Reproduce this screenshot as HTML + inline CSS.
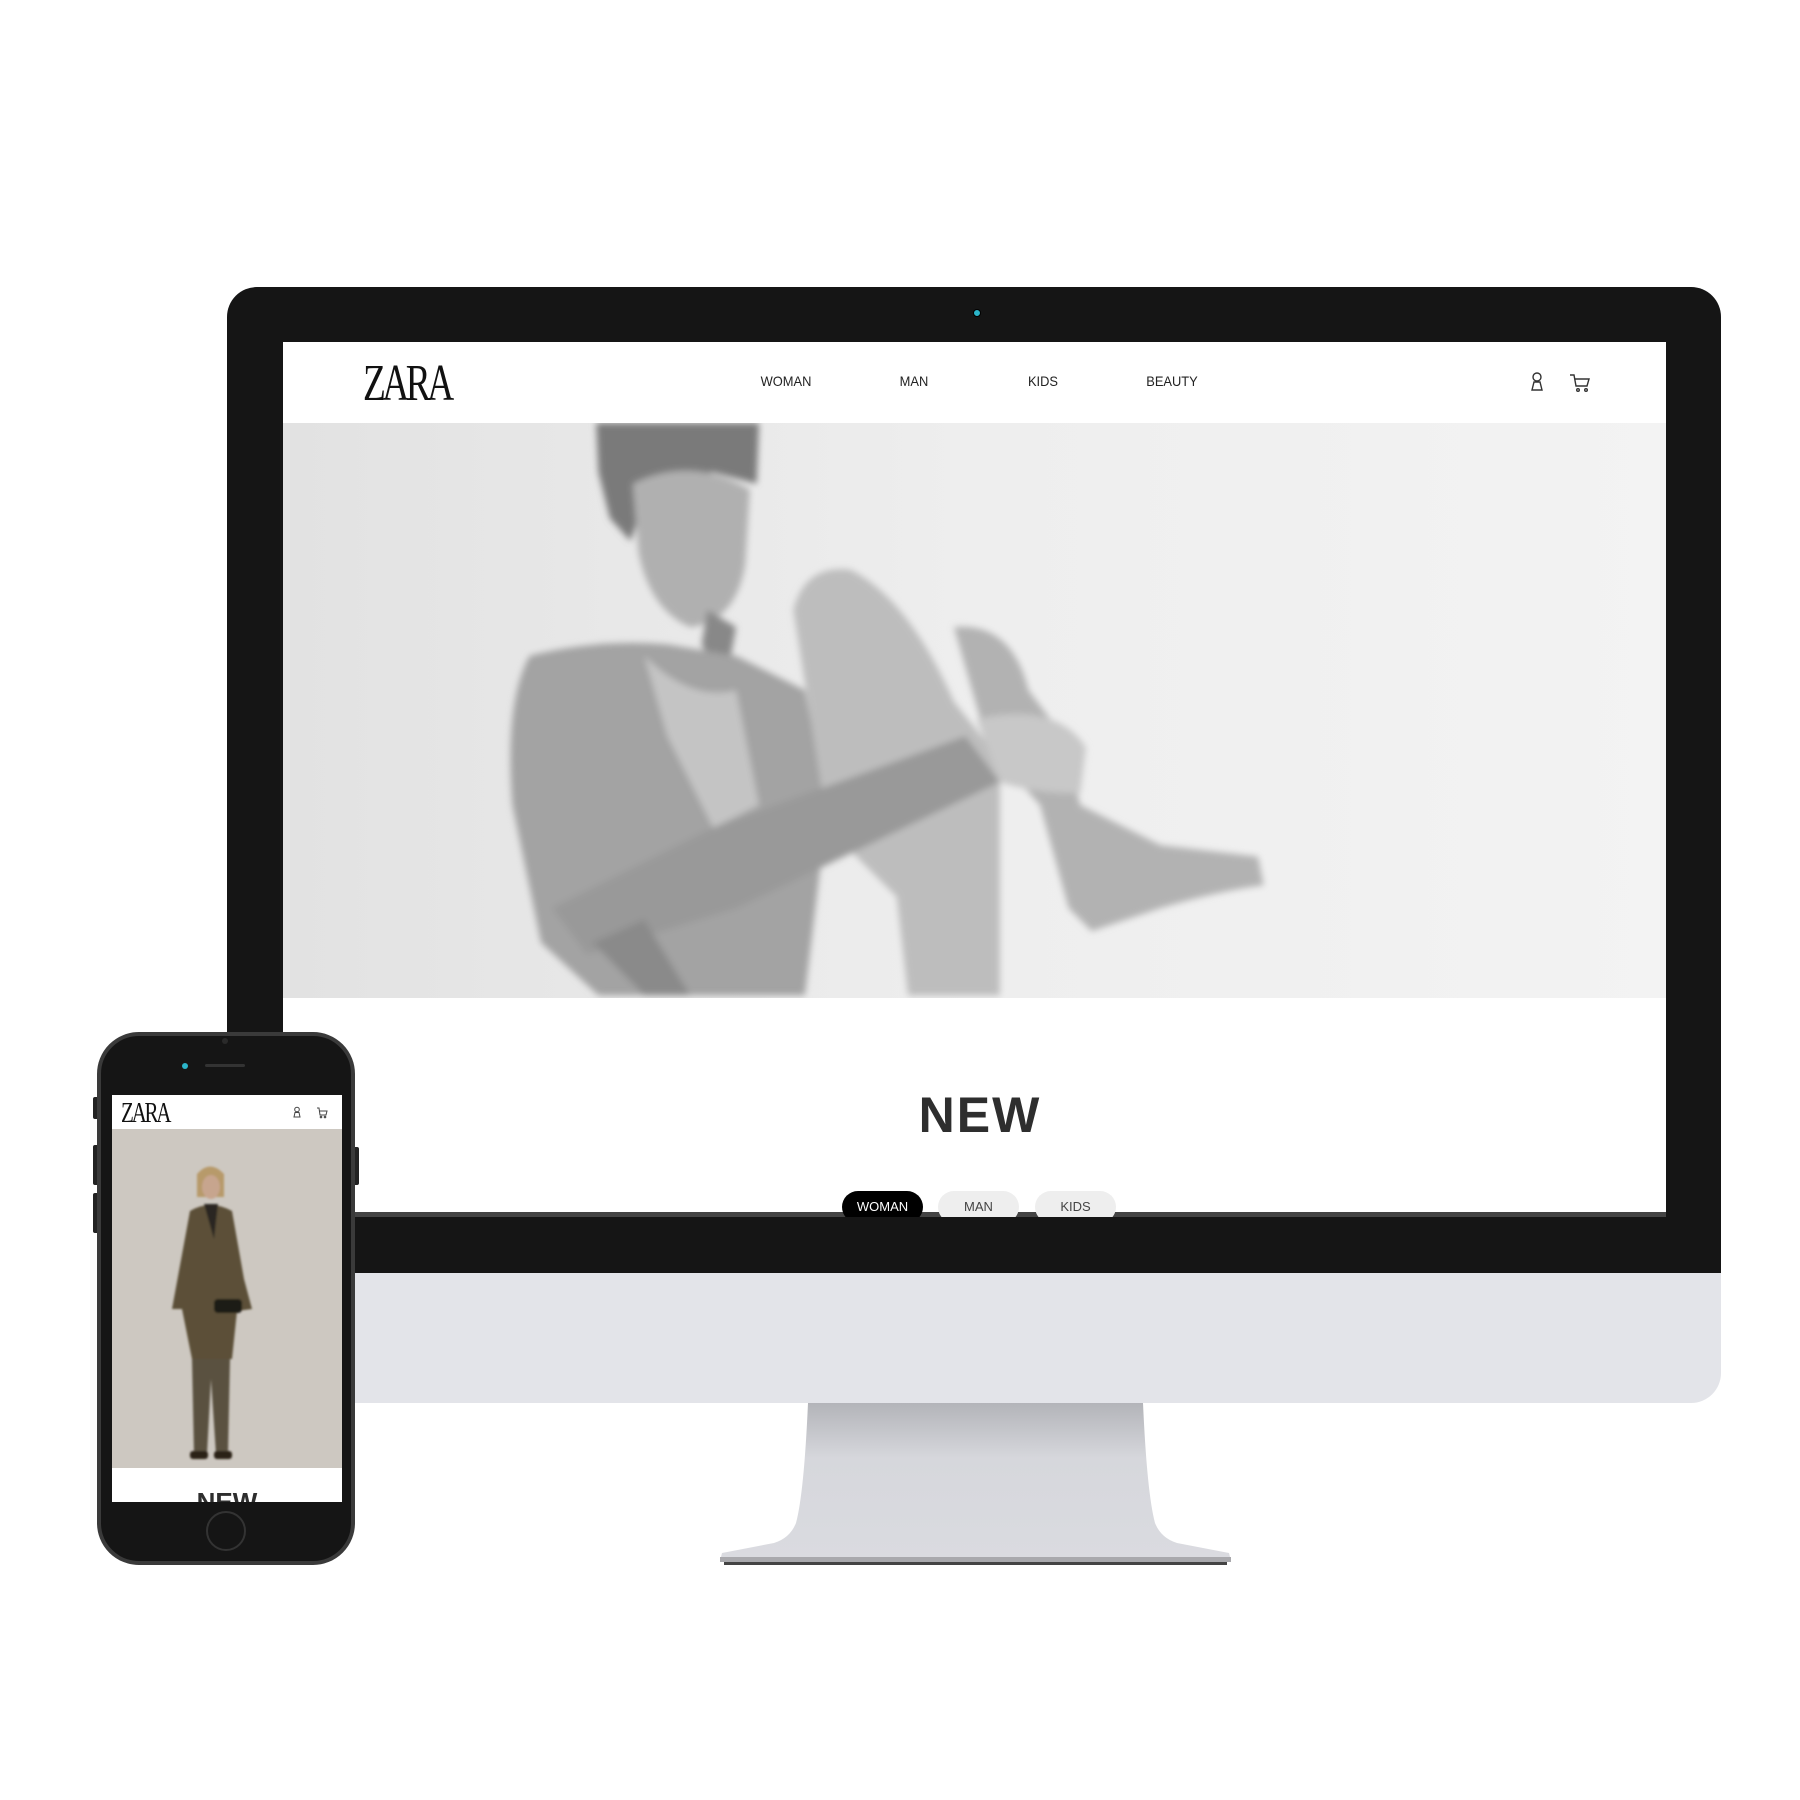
<!DOCTYPE html>
<html><head><meta charset="utf-8"><style>
*{margin:0;padding:0;box-sizing:border-box}
body{width:1800px;height:1800px;background:#fff;position:relative;overflow:hidden;font-family:"Liberation Sans",sans-serif}
.abs{position:absolute}
.nav{position:absolute;top:373px;font-size:14px;color:#222;transform:translateX(-50%) scaleX(0.92);letter-spacing:0}
.pill{position:absolute;top:1193px;width:81px;height:32px;border-radius:16px;font-size:13px;text-align:center;line-height:32px}
</style></head><body>
<svg class="abs" style="left:0;top:0" width="1800" height="1800">
<defs>
<linearGradient id="st" x1="0" y1="0" x2="0" y2="1"><stop offset="0" stop-color="#b3b4b9"/><stop offset="0.35" stop-color="#d6d7dc"/><stop offset="1" stop-color="#dadbe0"/></linearGradient>
</defs>
<g transform="translate(-3,-7)">
<path d="M811 1410 L1146 1410 Q1150 1500 1158 1530 Q1164 1545 1180 1550 L1232 1560 L1234 1568 L723 1568 L725 1560 L777 1550 Q793 1545 799 1530 Q807 1500 811 1410Z" fill="url(#st)"/>
<rect x="723" y="1564" width="511" height="5" fill="#a9a9ad"/>
<rect x="727" y="1569" width="503" height="3" fill="#444"/>
</g>
</svg>
<div class="abs" style="left:227px;top:287px;width:1494px;height:1116px;border-radius:30px;background:#e3e4e9;overflow:hidden">
 <div class="abs" style="left:0;top:0;width:1494px;height:986px;background:#151515"></div>
</div>
<div class="abs" style="left:973px;top:309px;width:8px;height:8px;border-radius:50%;background:#2bb5c9;border:1px solid #000"></div>
<div class="abs" style="left:283px;top:342px;width:1383px;height:875px;background:#fff;overflow:hidden;border-bottom:5px solid #444">
 <div class="abs" style="left:80px;top:12px;font-family:'Liberation Serif',serif;font-size:52px;letter-spacing:-5px;color:#111;transform:scaleX(0.72);transform-origin:left">ZARA</div>
</div>
<div class="nav" style="left:786px">WOMAN</div>
<div class="nav" style="left:914px">MAN</div>
<div class="nav" style="left:1043px">KIDS</div>
<div class="nav" style="left:1172px">BEAUTY</div>
<svg class="abs" style="left:1528px;top:371px" width="64" height="22" fill="none" stroke="#333" stroke-width="1.4">
<circle cx="9" cy="6" r="4"/><path d="M4 19 L6 11 L12 11 L14 19 Z"/>
<path d="M42 4 H46 L48 15 H59 L61 8 H47"/><circle cx="50" cy="19" r="1.3"/><circle cx="58" cy="19" r="1.3"/>
</svg>
<svg class="abs" style="left:283px;top:423px" width="1383" height="575">
<defs>
<linearGradient id="bg" x1="0" x2="1"><stop offset="0" stop-color="#e2e2e2"/><stop offset="0.5" stop-color="#eeeeee"/><stop offset="1" stop-color="#f3f3f3"/></linearGradient>
<filter id="b"><feGaussianBlur stdDeviation="3"/></filter>
</defs>
<rect width="1383" height="575" fill="url(#bg)"/>
<g transform="scale(1.147) translate(-245,-367)" filter="url(#b)">
<path d="M518 367 L660 367 L658 420 L620 410 L565 420 L548 470 L530 450 L520 410Z" fill="#7a7a7a"/>
<path d="M550 420 Q600 395 652 425 L648 490 Q640 540 600 545 Q565 530 555 480Z" fill="#b0b0b0"/>
<path d="M615 530 L640 545 L630 600 L610 560Z" fill="#888"/>
<path d="M460 570 Q520 555 580 560 L640 570 L700 600 L720 700 L700 866 L520 866 L470 820 L445 700 Q438 610 460 570Z" fill="#a3a3a3"/>
<path d="M560 570 Q600 610 640 600 L660 700 L620 720 L580 640Z" fill="#c4c4c4"/>
<path d="M690 530 Q700 490 740 495 Q790 520 830 610 L870 660 L870 866 L790 866 L780 780 L720 720 Z" fill="#bdbdbd"/>
<path d="M830 545 Q880 540 895 600 L925 640 L940 700 L1010 735 L1095 745 L1100 770 Q1060 775 1010 790 L950 810 L930 790 L905 700 L860 650 Z" fill="#b2b2b2"/>
<path d="M480 790 L620 720 L840 640 L870 680 L640 790 L510 830 Z" fill="#999"/>
<path d="M850 625 Q920 610 945 650 L940 690 Q900 690 870 680Z" fill="#c8c8c8"/>
<path d="M515 820 L560 866 L600 866 L560 800Z" fill="#8a8a8a"/>
</g>
</svg>
<div class="abs" style="left:880px;top:1086px;width:200px;text-align:center;font-size:50px;font-weight:bold;color:#2e2e2e;letter-spacing:2px">NEW</div>
<div class="abs" style="left:283px;top:1185px;width:1383px;height:32px;overflow:hidden">
 <div class="pill" style="left:559px;top:6px;background:#000;color:#fff">WOMAN</div>
 <div class="pill" style="left:655px;top:6px;background:#eee;color:#444">MAN</div>
 <div class="pill" style="left:752px;top:6px;background:#eee;color:#444">KIDS</div>
</div>
<div style="position:absolute;left:0;top:-7px;width:400px;height:1800px">
<div class="abs" style="left:93px;top:1104px;width:6px;height:22px;background:#222;border-radius:2px"></div>
<div class="abs" style="left:93px;top:1152px;width:6px;height:40px;background:#222;border-radius:2px"></div>
<div class="abs" style="left:93px;top:1200px;width:6px;height:40px;background:#222;border-radius:2px"></div>
<div class="abs" style="left:353px;top:1154px;width:6px;height:38px;background:#222;border-radius:2px"></div>
<div class="abs" style="left:97px;top:1039px;width:258px;height:533px;border-radius:42px;background:#151515;border:4px solid #3a3a3a"></div>
<div class="abs" style="left:182px;top:1070px;width:6px;height:6px;border-radius:50%;background:#2bb5c9"></div>
<div class="abs" style="left:205px;top:1071px;width:40px;height:3px;border-radius:2px;background:#333"></div>
<div class="abs" style="left:222px;top:1045px;width:6px;height:6px;border-radius:50%;background:#2a2a2a"></div>
<div class="abs" style="left:206px;top:1518px;width:40px;height:40px;border-radius:50%;border:2px solid #333"></div>
<div class="abs" style="left:112px;top:1102px;width:230px;height:407px;background:#fff;overflow:hidden">
 <div class="abs" style="left:9px;top:3px;font-family:'Liberation Serif',serif;font-size:28px;letter-spacing:-3px;color:#111;transform:scaleX(0.75);transform-origin:left">ZARA</div>
 <svg class="abs" style="left:180px;top:11px" width="40" height="14" fill="none" stroke="#444" stroke-width="1"><circle cx="5" cy="3.5" r="2.3"/><path d="M2 11 L3 6.5 H7 L8 11Z"/><path d="M25 2 H27 L28 9 H34 L35 5 H27.5"/><circle cx="29" cy="11" r=".8"/><circle cx="33" cy="11" r=".8"/></svg>
 <svg class="abs" style="left:0;top:34px" width="230" height="339">
  <defs><filter id="b2"><feGaussianBlur stdDeviation="1"/></filter></defs>
  <rect width="230" height="339" fill="#cdc8c1"/>
  <g filter="url(#b2)">
  <path d="M85 45 Q98 30 112 45 L112 68 L85 68Z" fill="#b79a6a"/>
  <ellipse cx="99" cy="58" rx="9" ry="12" fill="#c7a58e"/>
  <path d="M78 82 Q98 70 120 82 L132 150 L140 180 L125 182 L120 230 L80 230 L70 180 L60 180 Z" fill="#5c5039"/>
  <path d="M92 75 L106 75 L102 110 Z" fill="#2a2622"/>
  <path d="M80 230 L118 230 L116 325 L104 325 L99 250 L95 325 L82 325 Z" fill="#5a5140"/>
  <rect x="102" y="170" width="28" height="14" rx="4" fill="#1c1a18"/>
  <rect x="78" y="322" width="18" height="8" rx="3" fill="#2c2018"/><rect x="102" y="322" width="18" height="8" rx="3" fill="#2c2018"/>
  </g>
 </svg>
 <div class="abs" style="left:0;top:392px;width:230px;text-align:center;font-size:26px;font-weight:bold;color:#2e2e2e">NEW</div>
</div>
</div>
</body></html>
